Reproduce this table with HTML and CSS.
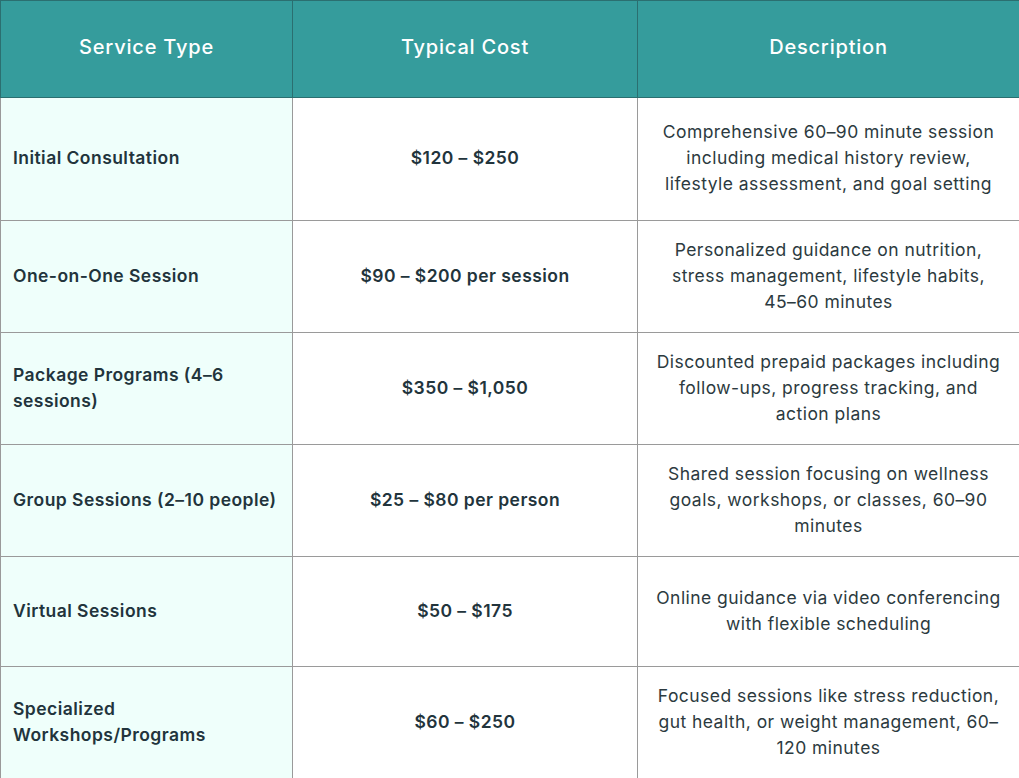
FILE: index.html
```html
<!DOCTYPE html>
<html lang="en">
<head>
<meta charset="utf-8">
<title>Service Pricing</title>
<link rel="stylesheet" href="styles.css">
</head>
<body>
<table class="pricing">
  <colgroup>
    <col class="col-type">
    <col class="col-cost">
    <col class="col-desc">
  </colgroup>
  <thead>
    <tr class="head-row">
      <th>Service Type</th>
      <th>Typical Cost</th>
      <th>Description</th>
    </tr>
  </thead>
  <tbody>
    <tr class="row-tall">
      <td class="type">Initial Consultation</td>
      <td class="cost">$120 – $250</td>
      <td class="desc">Comprehensive 60–90 minute session<br>including medical history review,<br>lifestyle assessment, and goal setting</td>
    </tr>
    <tr class="row">
      <td class="type">One-on-One Session</td>
      <td class="cost">$90 – $200 per session</td>
      <td class="desc">Personalized guidance on nutrition,<br>stress management, lifestyle habits,<br>45–60 minutes</td>
    </tr>
    <tr class="row">
      <td class="type">Package Programs (4–6<br>sessions)</td>
      <td class="cost">$350 – $1,050</td>
      <td class="desc">Discounted prepaid packages including<br>follow-ups, progress tracking, and<br>action plans</td>
    </tr>
    <tr class="row">
      <td class="type">Group Sessions (2–10 people)</td>
      <td class="cost">$25 – $80 per person</td>
      <td class="desc">Shared session focusing on wellness<br>goals, workshops, or classes, 60–90<br>minutes</td>
    </tr>
    <tr class="row-short">
      <td class="type">Virtual Sessions</td>
      <td class="cost">$50 – $175</td>
      <td class="desc">Online guidance via video conferencing<br>with flexible scheduling</td>
    </tr>
    <tr class="row">
      <td class="type">Specialized<br>Workshops/Programs</td>
      <td class="cost">$60 – $250</td>
      <td class="desc">Focused sessions like stress reduction,<br>gut health, or weight management, 60–<br>120 minutes</td>
    </tr>
  </tbody>
</table>
</body>
</html>
```

FILE: styles.css
```css
html, body {
  margin: 0;
  padding: 0;
  background: #ffffff;
}

body {
  font-family: "Inter", "Noto Sans", sans-serif;
  color: #22343c;
}

.pricing {
  width: 1019px;
  border-collapse: collapse;
  table-layout: fixed;
}

.col-type { width: 292px; }
.col-cost { width: 345px; }
.col-desc { width: 382px; }

.head-row {
  height: 97px;
}

.pricing th {
  background: #359c9c;
  color: #ffffff;
  font-size: 20px;
  font-weight: 500;
  letter-spacing: 0.8px;
  text-align: center;
  border: 1px solid #2b6f70;
  padding: 0 0 4px;
}

.pricing td {
  border: 1px solid #9a9a9a;
  padding: 0 12px 2px;
  font-size: 17.5px;
  letter-spacing: 0.45px;
  line-height: 26px;
  vertical-align: middle;
}

.row-tall { height: 123px; }
.row { height: 112px; }
.row-short { height: 110px; }

.type {
  background: #effffb;
  font-weight: 600;
  text-align: left;
}

.cost {
  font-weight: 600;
  text-align: center;
}

.desc {
  font-weight: 400;
  text-align: center;
  color: #2c3a40;
  white-space: nowrap;
}
```
